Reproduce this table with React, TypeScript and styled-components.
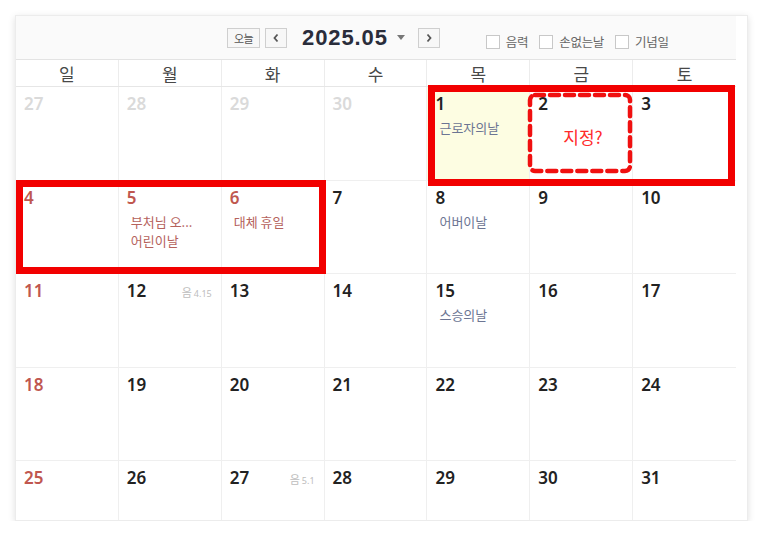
import styled, { createGlobalStyle } from "styled-components";

type Tone = "memorial" | "holiday";

type Day = {
    d: number;
    muted?: boolean;
    red?: boolean;
    highlight?: boolean;
    lunar?: string;
    events?: { text: string; tone: Tone }[];
};

const weeks: Day[][] = [
    [
        {d: 27, muted: true}, {d: 28, muted: true}, {d: 29, muted: true}, {d: 30, muted: true},
        {d: 1, highlight: true, events: [{text: "근로자의날", tone: "memorial"}]},
        {d: 2}, {d: 3},
    ],
    [
        {d: 4, red: true},
        {d: 5, red: true, events: [{text: "부처님 오...", tone: "holiday"}, {text: "어린이날", tone: "holiday"}]},
        {d: 6, red: true, events: [{text: "대체 휴일", tone: "holiday"}]},
        {d: 7},
        {d: 8, events: [{text: "어버이날", tone: "memorial"}]},
        {d: 9}, {d: 10},
    ],
    [
        {d: 11, red: true}, {d: 12, lunar: "4.15"}, {d: 13}, {d: 14},
        {d: 15, events: [{text: "스승의날", tone: "memorial"}]},
        {d: 16}, {d: 17},
    ],
    [{d: 18, red: true}, {d: 19}, {d: 20}, {d: 21}, {d: 22}, {d: 23}, {d: 24}],
    [{d: 25, red: true}, {d: 26}, {d: 27, lunar: "5.1"}, {d: 28}, {d: 29}, {d: 30}, {d: 31}],
];

const weekdays = ["일", "월", "화", "수", "목", "금", "토"];
const options = ["음력", "손없는날", "기념일"];

export default function App() {
    return (
        <>
            <GlobalStyle/>
            <Page>
                <Card>
                    <Toolbar>
                        <SmallButton>오늘</SmallButton>
                        <ArrowButton $gap={5}>
                            <Chevron dir="left"/>
                        </ArrowButton>
                        <Title>2025.05</Title>
                        <Caret/>
                        <ArrowButton $gap={13}>
                            <Chevron dir="right"/>
                        </ArrowButton>
                        <Options>
                            {options.map(o => (
                                <Option key={o}>
                                    <Box/>
                                    {o}
                                </Option>
                            ))}
                        </Options>
                    </Toolbar>

                    <WeekHeader>
                        {weekdays.map(w => <WeekName key={w}>{w}</WeekName>)}
                    </WeekHeader>

                    <Body>
                        {weeks.flat().map((day, i) => (
                            <Cell key={i} $highlight={day.highlight}>
                                <CellTop>
                                    <DayNum $muted={day.muted} $red={day.red}>{day.d}</DayNum>
                                    {day.lunar && (
                                        <Lunar>음<small>{day.lunar}</small></Lunar>
                                    )}
                                </CellTop>
                                {day.events && (
                                    <Events>
                                        {day.events.map(e => (
                                            <Event key={e.text} $tone={e.tone}>{e.text}</Event>
                                        ))}
                                    </Events>
                                )}
                            </Cell>
                        ))}

                        <RedFrame $left={412} $top={-2} $width={307} $height={101}/>
                        <RedFrame $left={0} $top={93} $width={310} $height={94}/>
                        <DashedMark>
                            <svg width="106" height="82" viewBox="0 0 106 82">
                                <rect x="3" y="3" width="100" height="76" rx="5" fill="none"
                                      stroke="#f01010" strokeWidth="4.5" strokeDasharray="9 6"
                                      strokeLinecap="round"/>
                            </svg>
                            <MarkText>지정?</MarkText>
                        </DashedMark>
                    </Body>
                </Card>
            </Page>
        </>
    );
}

const Chevron = ({dir}: { dir: "left" | "right" }) => (
    <svg width="8" height="10" viewBox="0 0 8 10">
        <path d={dir === "left" ? "M5.5 1.5 L2.5 5 L5.5 8.5" : "M2.5 1.5 L5.5 5 L2.5 8.5"}
              fill="none" stroke="#555" strokeWidth="1.8"/>
    </svg>
);

const GlobalStyle = createGlobalStyle`
    * { box-sizing: border-box; }
    body {
        margin: 0;
        background: #fff;
        font-family: "Noto Sans", "Noto Sans CJK KR", sans-serif;
    }
`

const Page = styled.div`
    padding: 15px 0 0 15px;
`

const Card = styled.div`
    width: 733px;
    height: 506px;
    background: #fff;
    border: 1px solid #ececec;
    box-shadow: 0 2px 7px rgba(0, 0, 0, 0.13);
    padding-right: 11px;
    overflow: hidden;
`

const Toolbar = styled.div`
    height: 44px;
    background: #fafafa;
    border-bottom: 1px solid #e3e3e3;
    display: flex;
    align-items: center;
    padding-left: 211px;
`

const SmallButton = styled.button`
    height: 20px;
    width: 33px;
    padding: 0;
    border: 1px solid #cfcfcf;
    background: #f7f7f7;
    color: #555;
    font-family: "Noto Sans CJK KR", sans-serif;
    font-size: 11px;
    letter-spacing: -0.5px;
    display: flex;
    align-items: center;
    justify-content: center;
`

const ArrowButton = styled(SmallButton)<{ $gap: number }>`
    width: 22px;
    margin-left: ${p => p.$gap}px;
`

const Title = styled.div`
    margin-left: 15px;
    font-family: "Liberation Sans", Arial, sans-serif;
    font-weight: 700;
    font-size: 22px;
    letter-spacing: 0.9px;
    color: #2a2d3b;
`

const Caret = styled.span`
    margin-left: 9px;
    width: 0;
    height: 0;
    border-left: 4px solid transparent;
    border-right: 4px solid transparent;
    border-top: 5px solid #777;
`

const Options = styled.div`
    margin-left: 46px;
    margin-top: 8px;
    display: flex;
    gap: 11px;
`

const Option = styled.label`
    display: flex;
    align-items: center;
    gap: 6px;
    font-family: "Noto Sans CJK KR", sans-serif;
    font-size: 12.5px;
    color: #666;
    letter-spacing: -0.3px;
`

const Box = styled.span`
    width: 14px;
    height: 14px;
    border: 1px solid #c8c8c8;
    background: #fff;
`

const WeekHeader = styled.div`
    display: grid;
    grid-template-columns: repeat(7, 1fr);
    height: 27px;
    border-bottom: 1px solid #e6e6e6;
`

const WeekName = styled.div`
    display: flex;
    align-items: center;
    justify-content: center;
    border-right: 1px solid #ececec;
    font-family: "Noto Sans CJK KR", sans-serif;
    font-size: 17px;
    color: #484848;

    &:last-child { border-right: none; }
`

const Body = styled.div`
    position: relative;
    display: grid;
    grid-template-columns: repeat(7, 1fr);
    grid-auto-rows: 93.5px;
`

const Cell = styled.div<{ $highlight?: boolean }>`
    padding: 7px 9px 0 8px;
    border-right: 1px solid #efefef;
    border-bottom: 1px solid #efefef;
    background: ${p => (p.$highlight ? "#fdfde2" : "#fff")};

    &:nth-child(7n) { border-right: none; }
`

const CellTop = styled.div`
    display: flex;
    align-items: baseline;
    justify-content: space-between;
`

const DayNum = styled.span<{ $muted?: boolean; $red?: boolean }>`
    font-family: "Noto Sans", sans-serif;
    font-weight: 600;
    font-size: 17px;
    line-height: 20px;
    color: ${p => (p.$muted ? "#dadada" : p.$red ? "#c0574f" : "#222")};
`

const Lunar = styled.span`
    font-family: "Noto Sans CJK KR", sans-serif;
    font-size: 11px;
    color: #bdbdbd;

    small {
        font-family: "Noto Sans", sans-serif;
        font-size: 9px;
        margin-left: 2px;
    }
`

const Events = styled.div`
    margin-top: 4px;
    padding-left: 4px;
    display: flex;
    flex-direction: column;
`

const Event = styled.div<{ $tone: Tone }>`
    font-family: "Noto Sans CJK KR", sans-serif;
    font-size: 13px;
    line-height: 19px;
    color: ${p => (p.$tone === "holiday" ? "#b5625c" : "#6c7593")};
    white-space: nowrap;
`

const RedFrame = styled.div<{ $left: number; $top: number; $width: number; $height: number }>`
    position: absolute;
    left: ${p => p.$left}px;
    top: ${p => p.$top}px;
    width: ${p => p.$width}px;
    height: ${p => p.$height}px;
    border: 7px solid #f20000;
    pointer-events: none;
`

const DashedMark = styled.div`
    position: absolute;
    left: 511px;
    top: 5px;
    width: 106px;
    height: 82px;

    svg {
        position: absolute;
        inset: 0;
    }
`

const MarkText = styled.div`
    position: absolute;
    inset: 0;
    display: flex;
    align-items: center;
    justify-content: center;
    padding: 6px 0 0 6px;
    font-family: "Noto Sans CJK KR", sans-serif;
    font-size: 17px;
    color: #ff2a2a;
`
